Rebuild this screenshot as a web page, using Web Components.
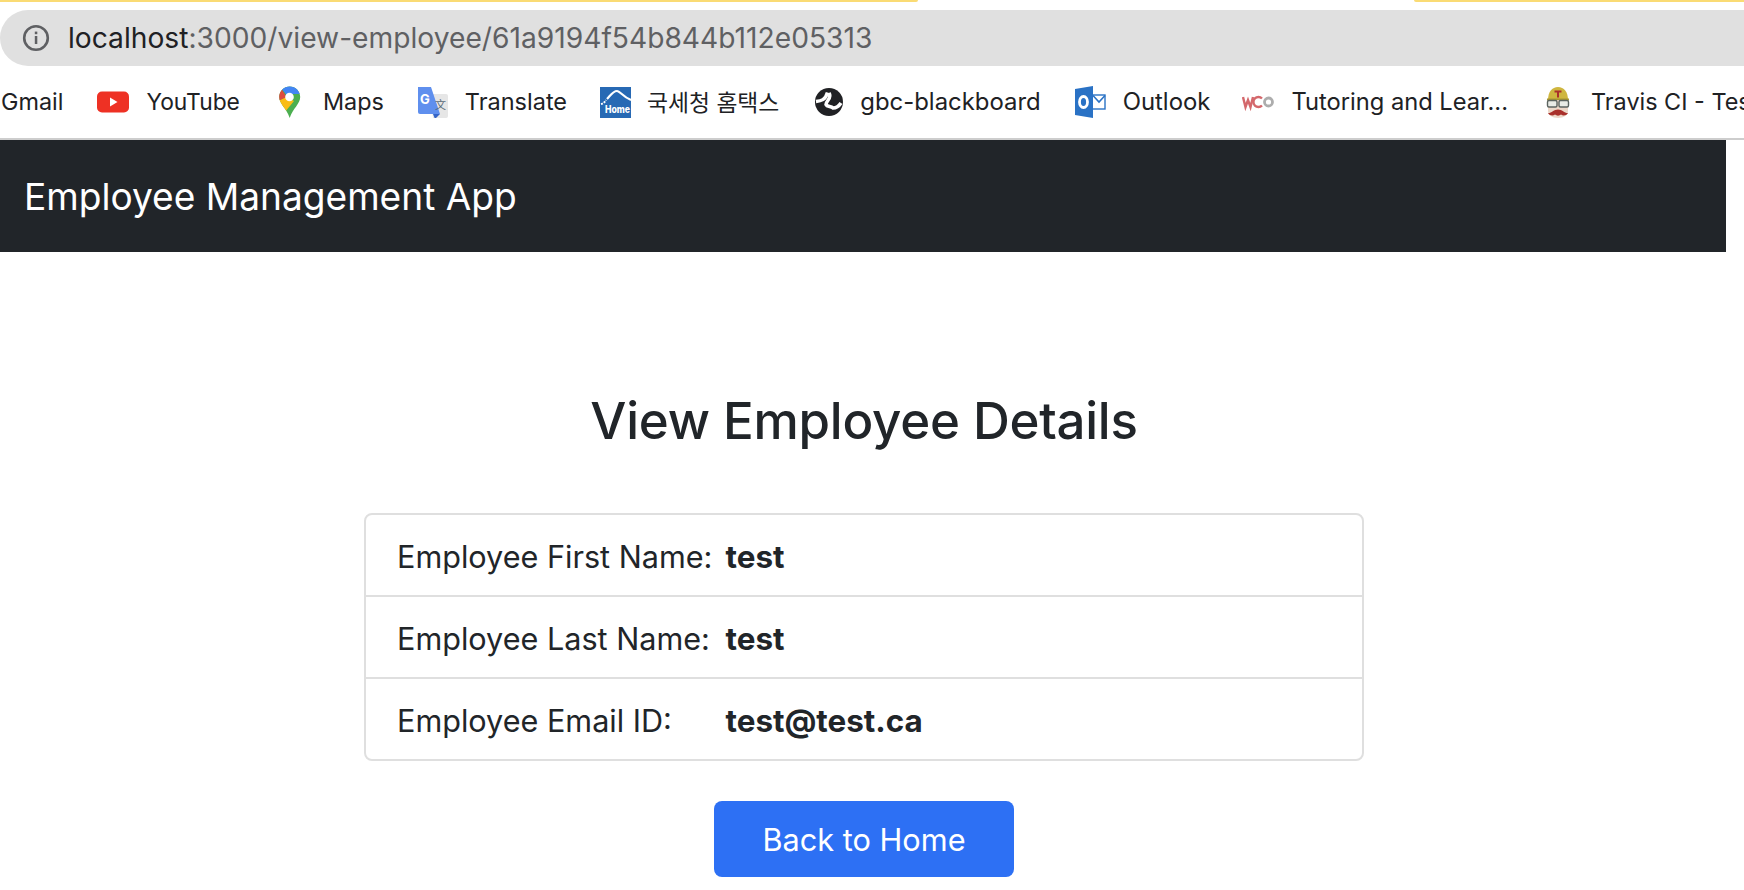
<!DOCTYPE html>
<html lang="en">
<head>
<meta charset="utf-8">
<title>Employee Management App</title>
<style>
    html, body { margin: 0; padding: 0; background: #fff; }
    body { width: 1744px; height: 890px; overflow: hidden; font-family: Inter, "Noto Sans CJK KR", sans-serif; color: #212529; }
</style>
</head>
<body>
<tab-strip></tab-strip>
<address-bar host-name="localhost" rest=":3000/view-employee/61a9194f54b844b112e05313"></address-bar>
<bookmark-bar>
    <bookmark-item label="Gmail" icon="none" style="margin-left:1px"></bookmark-item>
    <bookmark-item label="YouTube" icon="youtube" style="font-size:22.8px"></bookmark-item>
    <bookmark-item label="Maps" icon="maps"></bookmark-item>
    <bookmark-item label="Translate" icon="translate" style="font-size:23.5px;margin-left:-2px"></bookmark-item>
    <bookmark-item label="국세청 홈택스" icon="hometax" style="font-size:22.8px;margin-left:-2px;gap:16px"></bookmark-item>
    <bookmark-item label="gbc-blackboard" icon="globe" style="font-size:23.9px;gap:15px"></bookmark-item>
    <bookmark-item label="Outlook" icon="outlook" style="font-size:23.9px;gap:16px"></bookmark-item>
    <bookmark-item label="Tutoring and Lear..." icon="wco" style="font-size:23.7px;margin-left:-2px"></bookmark-item>
    <bookmark-item label="Travis CI - Tes" icon="travis"></bookmark-item>
</bookmark-bar>
<app-navbar>Employee Management App</app-navbar>
<view-employee>
    <detail-row label="Employee First Name:" value="test"></detail-row>
    <detail-row label="Employee Last Name:" value="test"></detail-row>
    <detail-row label="Employee Email ID:" value="test@test.ca"></detail-row>
</view-employee>

<script>
// svg for each bookmark favicon, all on a 32 box
const ICONS = {
    none: '',
    youtube: `<svg viewBox="0 0 32 32"><rect x="0" y="5.5" width="32" height="21" rx="5" fill="#ee3124"/><path d="M13 11.5v9l7.5-4.5z" fill="#fff"/></svg>`,
    maps: `<svg viewBox="0 0 32 32">
        <clipPath id="pin"><path d="M15.7 .5C21.5 .5 26.2 5.2 26.2 11 26.2 18 19 22 15.7 32 12.5 22 5.2 18 5.2 11 5.2 5.2 9.9 .5 15.7 .5z"/></clipPath>
        <g clip-path="url(#pin)">
            <rect width="32" height="32" fill="#4caf50"/>
            <polygon points="0,17 12,11 20,15 11,26 0,26" fill="#f9bc15"/>
            <polygon points="0,17 12.5,11 7,2 0,2" fill="#dd4b3e"/>
            <polygon points="7,2 12.5,9 19,8 28,8 28,0 7,0" fill="#4285f4"/>
        </g>
        <circle cx="15.5" cy="11" r="4.3" fill="#fff"/></svg>`,
    translate: `<svg viewBox="0 0 32 32">
        <path d="M14 8h16a2 2 0 0 1 2 2v20a2 2 0 0 1-2 2H17z" fill="#e6e6e6"/>
        <path d="M2 1h13l9 27H4a2 2 0 0 1-2-2z" fill="#5f8fee"/>
        <path d="M17 28h7l-5 5z" fill="#3565c8"/>
        <text x="9" y="18" font-family="Inter" font-weight="700" font-size="13" fill="#fff" text-anchor="middle">G</text>
        <text x="24.5" y="23" font-family="'Noto Sans CJK SC'" font-size="11" fill="#5a6a78" text-anchor="middle">文</text></svg>`,
    hometax: `<svg viewBox="0 0 32 32"><rect x="1" y="1" width="31" height="31" fill="#2769b4"/>
        <path d="M8 13C11 10 14 5 18 5c3 0 6 6 14 9" fill="none" stroke="#fff" stroke-width="2.2"/>
        <path d="M2 18c2-.5 4-2 5-4" fill="none" stroke="#fff" stroke-width="2" stroke-dasharray="2 1"/>
        <text x="6" y="27" textLength="25" lengthAdjust="spacingAndGlyphs" font-family="Inter" font-weight="800" font-size="10" fill="#fff">Home</text></svg>`,
    globe: `<svg viewBox="0 0 32 32"><circle cx="16" cy="16" r="14" fill="#202124"/>
        <path d="M3 15.5C8 15 12.500 14 14.500 6.500" fill="none" stroke="#fff" stroke-width="3.5"/>
        <path d="M16 7c3.500 5-3 7.500-3 11.500 1 2.500 5 1.500 7 3.500 3 0 6-2 8-5" fill="none" stroke="#fff" stroke-width="3.5"/></svg>`,
    outlook: `<svg viewBox="0 0 32 32">
        <rect x="17" y="9" width="13" height="14" fill="#fff" stroke="#2a72c5" stroke-width="1.4"/>
        <path d="M18 9.500l6 6.500 6-6.500" fill="none" stroke="#2a72c5" stroke-width="1.6"/>
        <path d="M0 3L18 0v32L0 29z" fill="#2a72c5"/>
        <ellipse cx="8.500" cy="16" rx="4" ry="5.500" fill="none" stroke="#fff" stroke-width="2.8"/></svg>`,
    wco: `<svg viewBox="0 0 32 32">
        <path d="M1 11l2.500 10 2.500-7 2.500 7 2.500-10" fill="none" stroke="#d4686c" stroke-width="2.4"/>
        <path d="M20 12.500a5 5 0 1 0 0 7" fill="none" stroke="#d4686c" stroke-width="2.4"/>
        <circle cx="26.500" cy="16" r="4" fill="none" stroke="#adadad" stroke-width="2.8"/></svg>`,
    travis: `<svg viewBox="0 0 32 32">
        <path d="M6 14C6 6 10 1 16 1s10 5 10 13z" fill="#cfb63f"/>
        <rect x="5" y="12.5" width="22" height="2" fill="#a8952f"/>
        <path d="M6 14h20v11c0 4-4 7-10 7s-10-3-10-7z" fill="#ecd7c8"/>
        <rect x="5.500" y="14.500" width="9.500" height="6.500" rx="1.500" fill="#e9ebe6" stroke="#5c6461" stroke-width="1.4"/>
        <rect x="17" y="14.500" width="9.500" height="6.500" rx="1.500" fill="#e9ebe6" stroke="#5c6461" stroke-width="1.4"/>
        <path d="M6 27c3 .5 6-3.500 10-3.500S23 27.500 26 27c-2 3-5 3-7 1.500-1.500 1.500-4.500 1.500-6 0-2 1.500-5 1.500-7-1.500z" fill="#a9302b"/>
        <path d="M12.500 4.500h7v2h-2.500v5h-2v-5h-2.500z" fill="#a9302b"/></svg>`
};

class TabStrip extends HTMLElement {
    constructor() {
        super();
        this.attachShadow({ mode: 'open' });
        this.shadowRoot.innerHTML = `
            <style>
                :host { display: flex; justify-content: space-between; height: 2px; background: #fff; }
                i { display: block; height: 2px; background: #fadb74; }
                .left { width: 918px; border-bottom-right-radius: 3px; }
                .right { width: 330px; border-bottom-left-radius: 3px; }
            </style>
            <i class="left"></i><i class="right"></i>
        `;
    }
}

class AddressBar extends HTMLElement {
    constructor() {
        super();
        this.attachShadow({ mode: 'open' });
    }

    connectedCallback() {
        this.shadowRoot.innerHTML = `
            <style>
                :host { display: block; padding-top: 8px; background: #fff; }
                .pill {
                    display: flex;
                    align-items: center;
                    gap: 18px;
                    height: 56px;
                    padding-left: 22px;
                    background: #e0e0e0;
                    border-radius: 28px 0 0 28px;
                    font-family: Inter, sans-serif;
                    font-size: 28.2px;
                    color: #5f6063;
                }
                svg { width: 28px; height: 28px; flex: none; }
                b { font-weight: 400; color: #202124; }
            </style>
            <div class="pill">
                <svg viewBox="0 0 28 28">
                    <circle cx="14" cy="14" r="11.8" fill="none" stroke="#5f6063" stroke-width="2.6"/>
                    <rect x="12.8" y="12" width="2.5" height="8" fill="#5f6063"/>
                    <rect x="12.8" y="7.6" width="2.5" height="2.6" fill="#5f6063"/>
                </svg>
                <span><b>${this.getAttribute('host-name')}</b>${this.getAttribute('rest')}</span>
            </div>
        `;
    }
}

class BookmarkBar extends HTMLElement {
    constructor() {
        super();
        this.attachShadow({ mode: 'open' });
        this.shadowRoot.innerHTML = `
            <style>
                :host {
                    display: flex;
                    align-items: center;
                    gap: 34px;
                    height: 72px;
                    overflow: hidden;
                    white-space: nowrap;
                    border-bottom: 2px solid #cdcdcd;
                    background: #fff;
                }
            </style>
            <slot></slot>
        `;
    }
}

class BookmarkItem extends HTMLElement {
    constructor() {
        super();
        this.attachShadow({ mode: 'open' });
    }

    connectedCallback() {
        const svg = ICONS[this.getAttribute('icon')] || '';
        this.shadowRoot.innerHTML = `
            <style>
                :host {
                    display: flex;
                    align-items: center;
                    gap: 17px;
                    flex: none;
                    font-family: Inter, "Noto Sans CJK KR", sans-serif;
                    font-size: 23.4px;
                    color: #202124;
                }
                .icon { display: flex; width: 32px; height: 32px; }
                .icon:empty { display: none; }
                .label { margin-bottom: 2px; }
                svg { width: 32px; height: 32px; }
            </style>
            <span class="icon">${svg}</span><span class="label">${this.getAttribute('label')}</span>
        `;
    }
}

class AppNavbar extends HTMLElement {
    constructor() {
        super();
        this.attachShadow({ mode: 'open' });
        this.shadowRoot.innerHTML = `
            <style>
                :host {
                    display: flex;
                    align-items: center;
                    width: 1726px;
                    height: 112px;
                    padding-left: 24px;
                    box-sizing: border-box;
                    background: #212529;
                    color: #fff;
                    font-size: 37.1px;
                }
            </style>
            <slot></slot>
        `;
    }
}

class ViewEmployee extends HTMLElement {
    constructor() {
        super();
        this.attachShadow({ mode: 'open' });
        this.shadowRoot.innerHTML = `
            <style>
                :host { display: flex; flex-direction: column; align-items: center; width: 1728px; padding-top: 136px; }
                h1 { margin: 0 0 59px; font-size: 51px; letter-spacing: -0.25px; font-weight: 500; line-height: 66px; color: #212529; }
                .card {
                    width: 1000px;
                    box-sizing: border-box;
                    border: 2px solid #dfdfdf;
                    border-radius: 8px;
                    margin-bottom: 40px;
                }
                ::slotted(detail-row:not(:last-child)) { border-bottom: 2px solid #dfdfdf; }
                a {
                    display: flex;
                    align-items: center;
                    justify-content: center;
                    width: 300px;
                    height: 76px;
                    border-radius: 8px;
                    background: #2d70f4;
                    color: #fff;
                    font-size: 30.7px;
                    text-decoration: none;
                }
            </style>
            <h1>View Employee Details</h1>
            <div class="card"><slot></slot></div>
            <a href="#">Back to Home</a>
        `;
    }
}

class DetailRow extends HTMLElement {
    constructor() {
        super();
        this.attachShadow({ mode: 'open' });
    }

    connectedCallback() {
        this.shadowRoot.innerHTML = `
            <style>
                :host {
                    display: grid;
                    grid-template-columns: 328.5px 1fr;
                    align-items: center;
                    height: 80px;
                    padding-left: 31px;
                    font-size: 30.6px;
                    color: #212529;
                }
                span { padding-top: 2px; }
                b { font-weight: 700; font-size: 31.4px; padding-top: 3px; }
            </style>
            <span>${this.getAttribute('label')}</span><b>${this.getAttribute('value')}</b>
        `;
    }
}

customElements.define('tab-strip', TabStrip);
customElements.define('address-bar', AddressBar);
customElements.define('bookmark-bar', BookmarkBar);
customElements.define('bookmark-item', BookmarkItem);
customElements.define('app-navbar', AppNavbar);
customElements.define('view-employee', ViewEmployee);
customElements.define('detail-row', DetailRow);
</script>
</body>
</html>
